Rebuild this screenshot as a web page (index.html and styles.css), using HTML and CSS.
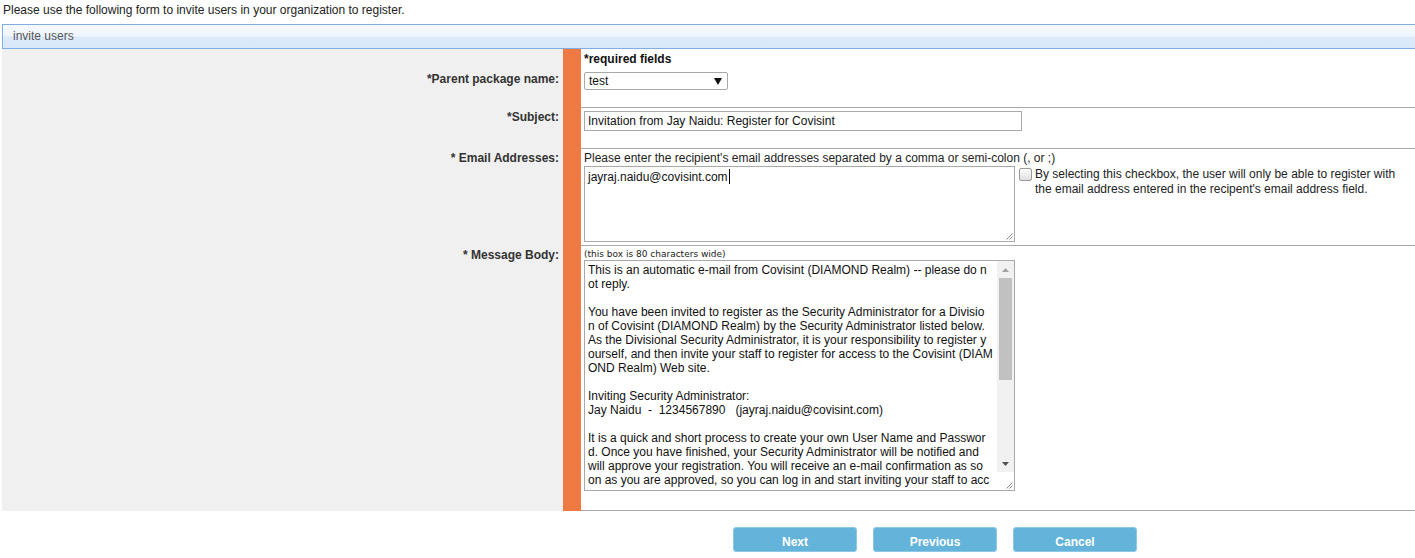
FILE: index.html
```html
<!DOCTYPE html>
<html>
<head>
<meta charset="utf-8">
<title>Invite users</title>
<link rel="stylesheet" href="styles.css">
</head>
<body>
<div class="page">
  <p class="intro">Please use the following form to invite users in your organization to register.</p>
  <div class="bar">invite users</div>

  <div class="form">
    <div class="strip"></div>

    <div class="lbl"></div>
    <div class="cell r0"><b>*required fields</b></div>

    <div class="lbl l1">*Parent package name:</div>
    <div class="cell sep r1">
      <div class="select"><span>test</span><svg class="arrow" width="8" height="7" viewBox="0 0 8 7"><polygon points="0,0 8,0 4,7" fill="#111"/></svg></div>
    </div>

    <div class="lbl l2">*Subject:</div>
    <div class="cell sep r2">
      <div class="input">Invitation from Jay Naidu: Register for Covisint</div>
    </div>

    <div class="lbl l3">* Email Addresses:</div>
    <div class="cell sep r3">
      <div class="hint">Please enter the recipient's email addresses separated by a comma or semi-colon (, or ;)</div>
      <div class="email-row">
        <div class="emailbox">
          <div class="emailtext">jayraj.naidu@covisint.com<span class="caret"></span></div>
          <svg class="grip" width="9" height="9" viewBox="0 0 9 9"><path d="M8.5 2.5 L2.5 8.5 M8.5 5.5 L5.5 8.5" stroke="#8a8a8a" stroke-width="1"/></svg>
        </div>
        <div class="check"><span class="box"></span><span class="checktext">By selecting this checkbox, the user will only be able to register with<br>the email address entered in the recipent's email address field.</span></div>
      </div>
    </div>

    <div class="lbl l4">* Message Body:</div>
    <div class="cell sep r4">
      <div class="small">(this box is 80 characters wide)</div>
      <div class="msgbox">
        <div class="msgtext">This is an automatic e-mail from Covisint (DIAMOND Realm) -- please do n
ot reply.

You have been invited to register as the Security Administrator for a Divisio
n of Covisint (DIAMOND Realm) by the Security Administrator listed below.
As the Divisional Security Administrator, it is your responsibility to register y
ourself, and then invite your staff to register for access to the Covisint (DIAM
OND Realm) Web site.

Inviting Security Administrator:
Jay Naidu  -  1234567890   (jayraj.naidu@covisint.com)

It is a quick and short process to create your own User Name and Passwor
d. Once you have finished, your Security Administrator will be notified and
will approve your registration. You will receive an e-mail confirmation as so
on as you are approved, so you can log in and start inviting your staff to acc</div>
        <div class="sbar">
          <div class="sbtn"><svg width="7" height="4" viewBox="0 0 7 4"><polygon points="3.5,0 7,4 0,4" fill="#a3a3a3"/></svg></div>
          <div class="track"><div class="thumb"></div></div>
          <div class="sbtn"><svg width="7" height="4" viewBox="0 0 7 4"><polygon points="0,0 7,0 3.5,4" fill="#505050"/></svg></div>
          <div class="corner"><svg width="9" height="9" viewBox="0 0 9 9"><path d="M8.5 2.5 L2.5 8.5 M8.5 5.5 L5.5 8.5" stroke="#8a8a8a" stroke-width="1"/></svg></div>
        </div>
      </div>
    </div>
  </div>

  <div class="buttons">
    <div class="btn">Next</div>
    <div class="btn">Previous</div>
    <div class="btn">Cancel</div>
  </div>
</div>
</body>
</html>
```

FILE: styles.css
```css
body {
  margin: 0;
  font-family: "Liberation Sans", Arial, sans-serif;
  font-size: 12px;
  color: #222;
  background: #fff;
  overflow: hidden;
}

.page {
  padding-left: 2px;
}

.intro {
  margin: 0 0 7px 0;
  padding: 3px 0 0 1px;
  line-height: 14px;
  height: 14px;
}

.bar {
  height: 23px;
  line-height: 23px;
  border: 1px solid #80ade2;
  border-right: 0;
  padding-left: 10px;
  color: #555;
  background: linear-gradient(#f6faff 0%, #eef5fe 46%, #dceafb 54%, #d9e8fb 100%);
}

.form {
  display: grid;
  grid-template-columns: 561px 18px 1fr;
}

.strip {
  grid-column: 2;
  grid-row: 1 / 6;
  background: #ef7943;
}

.lbl {
  grid-column: 1;
  background: #f0f0f0;
  text-align: right;
  padding-right: 4px;
  font-weight: bold;
  line-height: 14px;
  color: #333;
}

.l1 { padding-top: 3px; }
.l2 { padding-top: 2px; }
.l3 { padding-top: 2px; }
.l4 { padding-top: 2px; }

.cell {
  grid-column: 3;
  padding-left: 3px;
  line-height: 14px;
}

.sep {
  border-bottom: 1px solid #a9a9a9;
}

.r0 { padding-top: 3px; padding-bottom: 3px; color: #111; }
.r1 { padding-top: 3px; padding-bottom: 17px; }
.r2 { padding-top: 3px; padding-bottom: 17px; }
.r3 { padding-top: 2px; padding-bottom: 3px; }
.r4 { padding-top: 2px; padding-bottom: 19px; }

.select {
  box-sizing: border-box;
  width: 144px;
  height: 18px;
  border: 1px solid #a9a9a9;
  border-radius: 2px;
  display: flex;
  align-items: center;
  justify-content: space-between;
  padding: 0 6px 0 4px;
  color: #111;
}

.arrow {
  margin-right: -1px;
}

.input {
  box-sizing: border-box;
  width: 438px;
  height: 20px;
  border: 1px solid #a9a9a9;
  padding-left: 3px;
  line-height: 18px;
  color: #111;
}

.hint {
  color: #222;
}

.email-row {
  display: flex;
  margin-top: 1px;
}

.emailbox {
  box-sizing: border-box;
  width: 431px;
  height: 76px;
  border: 1px solid #a9a9a9;
  padding: 2px 3px;
  display: flex;
  flex-direction: column;
  justify-content: space-between;
  color: #111;
}

.caret {
  display: inline-block;
  width: 1px;
  height: 15px;
  background: #000;
  vertical-align: -3px;
  margin-left: 1px;
}

.grip {
  align-self: flex-end;
  margin: 0 -2px -1px 0;
}

.check {
  display: flex;
  align-items: flex-start;
  padding-left: 4px;
  line-height: 15px;
  padding-top: 1px;
}

.box {
  box-sizing: border-box;
  width: 13px;
  height: 13px;
  border: 1px solid #9a9a9a;
  border-radius: 2px;
  background: linear-gradient(#fdfdfd, #dedede);
  margin-top: 1px;
  margin-right: 3px;
  flex: none;
}

.checktext {
  color: #222;
}

.small {
  font-family: "DejaVu Sans", Verdana, sans-serif;
  font-size: 9px;
  line-height: 12px;
  color: #222;
}

.msgbox {
  box-sizing: border-box;
  width: 431px;
  height: 231px;
  border: 1px solid #a9a9a9;
  display: flex;
}

.msgtext {
  flex: 1;
  padding: 2px 3px 0;
  white-space: pre;
  overflow: hidden;
  line-height: 14px;
  color: #111;
}

.sbar {
  width: 17px;
  display: flex;
  flex-direction: column;
  background: #f1f1f1;
}

.sbtn {
  height: 17px;
  display: flex;
  align-items: center;
  justify-content: center;
}

.track {
  flex: 1;
  padding: 0 2px;
}

.thumb {
  height: 102px;
  background: #c1c1c1;
}

.corner {
  height: 17px;
  background: #fff;
  display: flex;
  align-items: flex-end;
  justify-content: flex-end;
  padding: 0 1px 1px 0;
}

.buttons {
  display: flex;
  gap: 16px;
  margin: 16px 0 0 731px;
}

.btn {
  box-sizing: border-box;
  width: 124px;
  height: 25px;
  border: 1px solid #8cc7e5;
  border-radius: 3px;
  background: #63b3da;
  color: #fff;
  font-weight: bold;
  text-align: center;
  padding-top: 5px;
  line-height: 18px;
}
```
